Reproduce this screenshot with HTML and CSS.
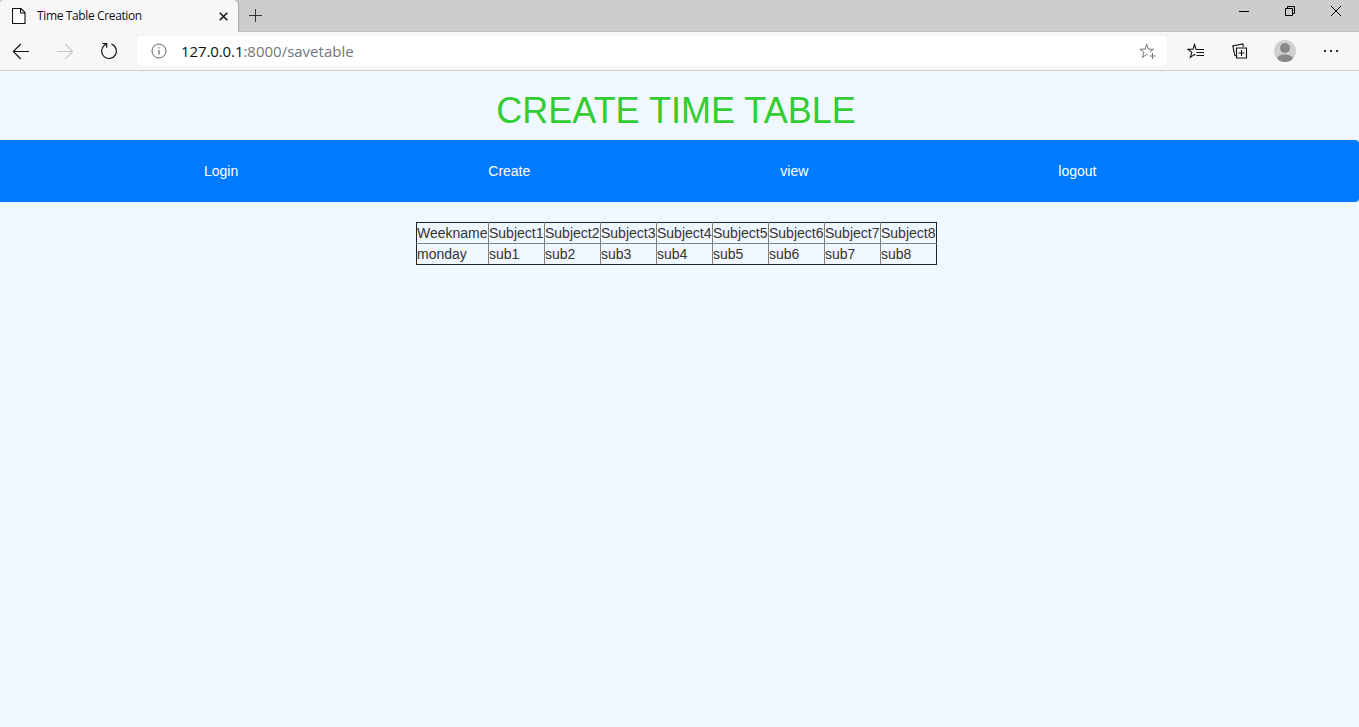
FILE: index.html
```html
<!DOCTYPE html>
<html lang="en">
<head>
<meta charset="utf-8">
<title>Time Table Creation</title>
<link rel="stylesheet" href="styles.css">
</head>
<body>
<header class="browser">
  <div class="tabstrip">
    <div class="tab">
      <svg class="page-icon" width="14" height="16" viewBox="0 0 14 16"><path d="M.5.5h8.500l4 4v11H.5zM8.500.8v4.200h4.300" fill="#fff" stroke="#111" stroke-width="1.100"/></svg>
      <span class="tab-title">Time Table Creation</span>
      <svg class="tab-close" width="9" height="9" viewBox="0 0 9 9"><path d="M.7.7l7.600 7.600M8.300.7L.7 8.300" stroke="#111" stroke-width="1.500"/></svg>
    </div>
    <svg class="new-tab" width="13" height="13" viewBox="0 0 13 13"><path d="M6.500 0v13M0 6.500h13" stroke="#333"/></svg>
    <div class="window-buttons">
      <svg width="10" height="10" viewBox="0 0 10 10"><path d="M0 5.500h10" stroke="#000"/></svg>
      <svg width="10" height="10" viewBox="0 0 10 10"><path d="M.5 2.500h7v7h-7zM2.500 2.500v-2h7v7h-2" fill="none" stroke="#000"/></svg>
      <svg width="10" height="10" viewBox="0 0 10 10"><path d="M0 0l10 10M10 0L0 10" stroke="#000"/></svg>
    </div>
  </div>
  <div class="toolbar">
    <div class="nav-buttons">
      <svg width="18" height="17" viewBox="0 0 18 17"><path d="M17 8.500H1.500M8.800 1L1.300 8.500 8.800 16" fill="none" stroke="#111" stroke-width="1.100"/></svg>
      <svg width="18" height="17" viewBox="0 0 18 17"><path d="M1 8.500h15.500M9.200 1l7.500 7.500L9.200 16" fill="none" stroke="#c8c8c8" stroke-width="1.100"/></svg>
      <svg width="18" height="18" viewBox="0 0 18 18"><path d="M11.500 2.100A7.400 7.400 0 1 1 4.500 3.200L6.500 1.500M2.500 1.500h4.200v4.300" fill="none" stroke="#111" stroke-width="1.200"/></svg>
    </div>
    <div class="address">
      <svg class="info" width="16" height="16" viewBox="0 0 16 16"><circle cx="8" cy="8" r="7" fill="none" stroke="#666"/><path d="M8 7v4.500M8 4.200v1.400" stroke="#555" stroke-width="1.100"/></svg>
      <span class="url"><span class="host">127.0.0.1</span><span class="path">:8000/savetable</span></span>
      <svg class="add-star" width="17" height="17" viewBox="0 0 17 17"><path d="M8.700 12l-1-.7-4.400 3.200 1.700-5.200L.9 6.200h5.200l1.600-4.900 1.700 4.900h5.100L11 8.800M13.500 10v6M10.500 13h6" fill="none" stroke="#767676"/></svg>
    </div>
    <div class="tools">
      <svg width="18" height="16" viewBox="0 0 18 16"><path d="M8.300 12l-.8-.6-4.200 3 1.600-5L.9 6.300H6l1.500-4.900L9 6.300M9 6.500h8M9.500 9.500H17M9.500 12.500H17" fill="none" stroke="#111" stroke-width="1.100"/></svg>
      <svg width="16" height="16" viewBox="0 0 16 16"><path d="M4.500 5h10v10h-10zM9.500 7v6M6.500 10h6M3.800 12.700l-1-.4L.8 2.900l10-2 .6 3" fill="none" stroke="#111" stroke-width="1.100"/></svg>
      <svg width="22" height="22" viewBox="0 0 22 22"><defs><clipPath id="face"><circle cx="11" cy="11" r="11"/></clipPath></defs><circle cx="11" cy="11" r="11" fill="#d2d0ce"/><g fill="#8a8886" clip-path="url(#face)"><circle cx="11" cy="8" r="5"/><ellipse cx="11" cy="19" rx="8" ry="4.500"/></g></svg>
      <svg width="16" height="4" viewBox="0 0 16 4"><path d="M1 1h2v2H1zM7 1h2v2H7zM13 1h2v2h-2z" fill="#333"/></svg>
    </div>
  </div>
</header>
<main>
  <h1>CREATE TIME TABLE</h1>
  <nav class="menu"><a>Login</a><a>Create</a><a>view</a><a>logout</a></nav>
  <table class="timetable">
    <tr><td class="week">Weekname</td><td>Subject1</td><td>Subject2</td><td>Subject3</td><td>Subject4</td><td>Subject5</td><td>Subject6</td><td>Subject7</td><td>Subject8</td></tr>
    <tr><td>monday</td><td>sub1</td><td>sub2</td><td>sub3</td><td>sub4</td><td>sub5</td><td>sub6</td><td>sub7</td><td>sub8</td></tr>
  </table>
</main>
</body>
</html>
```
FILE: styles.css
```css
* { box-sizing: border-box; }
body {
  margin: 0;
  height: 727px;
  overflow: hidden;
  background: #f0f8ff;
  color: #333;
  font: 14px/20px "Liberation Sans", Arial, sans-serif;
}
svg { display: block; flex: none; }
.browser {
  height: 71px;
  background: #f7f7f7;
  border-bottom: 1px solid #d0d0d0;
  font-family: "Open Sans", "Noto Sans", sans-serif;
}
.tabstrip {
  display: flex;
  height: 32px;
  background: #cdcdcd;
  border-bottom: 1px solid #c2c2c2;
}
.tab {
  display: flex;
  align-items: center;
  width: 238px;
  height: 32px;
  padding: 0 10px 0 12px;
  background: #f7f7f7;
  border-radius: 4px 5px 0 0;
  box-shadow: 1px 0 2px #aaa;
  clip-path: inset(0 -3px 0 0);
}
.tab-title {
  margin-left: 11px;
  width: 182px;
  color: #111;
  font-size: 12px;
  letter-spacing: -0.37px;
  white-space: nowrap;
}
.tab-close { margin: 1px 0 0; }
.new-tab { margin: 9px 0 0 11px; }
.window-buttons {
  display: flex;
  gap: 36px;
  margin: 6px 18px 0 auto;
}
.toolbar {
  display: flex;
  align-items: center;
  height: 38px;
}
.nav-buttons {
  display: flex;
  align-items: center;
  gap: 26px;
  width: 137px;
  padding-left: 12px;
}
.address {
  display: flex;
  align-items: center;
  width: 1030px;
  height: 30px;
  padding: 0 11px 0 14px;
  background: #fff;
  border-radius: 3px;
  box-shadow: 0 0 2px #e4e4e4;
}
.url {
  margin-left: 14px;
  font-size: 15px;
  white-space: nowrap;
}
.host { color: #111; letter-spacing: -0.1px; }
.path { color: #767676; }
.add-star { margin-left: auto; }
.tools {
  display: flex;
  align-items: center;
  width: 192px;
  padding: 0 20px;
  justify-content: space-between;
}
h1 {
  margin: 20px 0 9px;
  padding-right: 7px;
  color: #32cd32;
  font-size: 36px;
  font-weight: 400;
  line-height: 40px;
  text-align: center;
}
.menu {
  display: flex;
  align-items: center;
  gap: 250px;
  height: 62px;
  padding-left: 204px;
  background: #007bff;
  border-radius: 0 4px 4px 0;
  color: #fff;
}
.timetable {
  width: 521px;
  margin: 20px 0 0 416px;
  border: 1px solid #222;
  border-collapse: collapse;
  table-layout: fixed;
}
.timetable td {
  width: 56px;
  padding: 0;
  border: 1px solid #808080;
  white-space: nowrap;
}
.timetable .week { width: 72px; }
.timetable tr:first-child td { border-top-color: #222; }
.timetable tr:last-child td { border-bottom-color: #222; }
.timetable td:first-child { border-left-color: #222; }
.timetable td:last-child { border-right-color: #222; }
```
